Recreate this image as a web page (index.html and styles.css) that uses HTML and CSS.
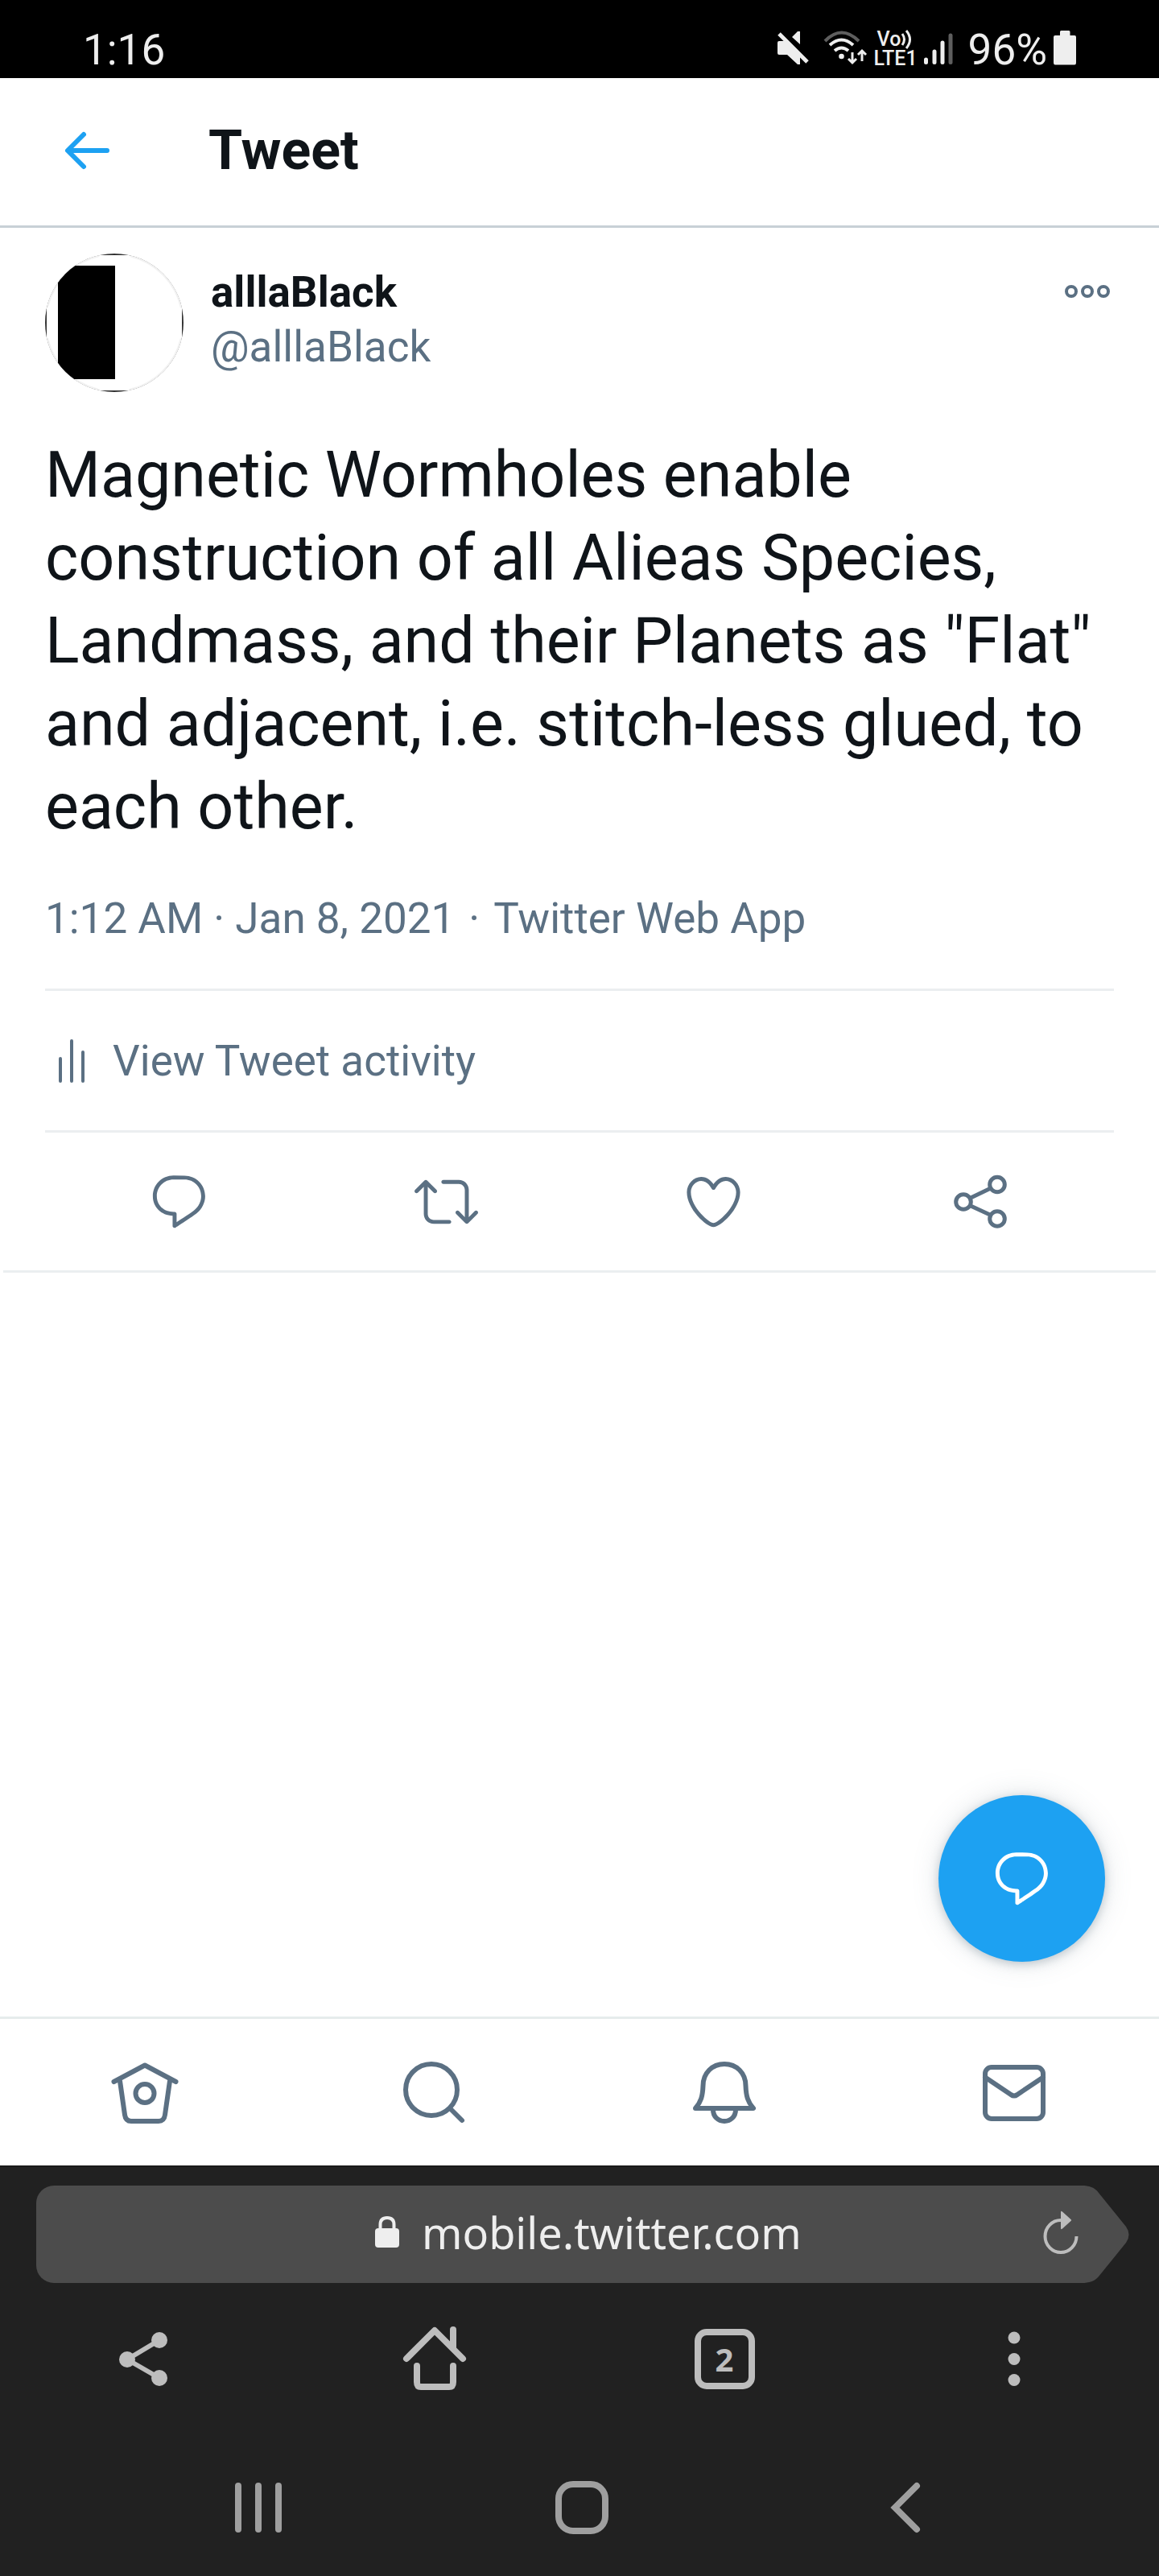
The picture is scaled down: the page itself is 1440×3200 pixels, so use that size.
FILE: index.html
```html
<!DOCTYPE html>
<html lang="en">
<head>
<meta charset="utf-8">
<meta name="viewport" content="width=device-width, initial-scale=1">
<title>Tweet</title>
<link rel="stylesheet" href="styles.css">
</head>
<body>
<div class="status-bar">
  <time class="clock">1:16</time>
  <div class="status-icons">
    <svg class="icon-mute" viewBox="0 0 48 44" width="48" height="44" aria-label="Muted">
      <path d="M2 13H9L28 31V42H25L12 30H2Q0 30 0 28V15Q0 13 2 13ZM18 8L25 1H28V17Z" fill="#eee"/>
      <path d="M4 1L40 36" stroke="#000" stroke-width="5"/>
      <path d="M2 4L37 39" stroke="#eee" stroke-width="5"/>
    </svg>
    <svg viewBox="0 0 56 44" width="56" height="44" fill="none" stroke="#eee" stroke-width="4" aria-label="Wi-Fi">
      <path d="M3 13Q23.500-8 45 13" stroke="#5e5e5e"/>
      <path d="M9 18Q23.500 5 38 18M15 25Q23.500 18 32 25"/>
      <circle cx="23.500" cy="32" r="3.300" fill="#eee" stroke="none"/>
      <path d="M37 27V39M32 35L37 40L42 35M49 38V26M44 30L49 25L54 30" stroke-width="3"/>
    </svg>
    <div class="volte">
      <span class="volte-top">Vo<svg viewBox="0 0 16 24" width="16" height="24" fill="none" stroke="#eee" stroke-width="3"><path d="M2 5Q7 12 2 19M7 1Q16 12 7 23"/></svg></span>
      <span>LTE1</span>
    </div>
    <svg viewBox="0 0 36 44" width="36" height="44" stroke="#eee" stroke-width="5" stroke-linecap="round" aria-label="Signal">
      <path d="M2.500 36V39.500M13 26V39.500M23 15V39.500"/><path d="M33 6V39.500" stroke="#5e5e5e"/>
    </svg>
    <span class="battery-level">96%</span>
    <svg viewBox="0 0 28 44" width="28" height="44" fill="#eee" aria-label="Battery"><path d="M8 1.500Q8 0 9.500 0H19Q20.500 0 20.500 1.500V6H26Q28 6 28 8V40Q28 42.500 26 42.500H2Q0 42.500 0 40V8Q0 6 2 6H8Z"/></svg>
  </div>
</div>

<header class="page-header">
  <button class="icon-button" type="button" aria-label="Back">
    <svg viewBox="0 0 58 50" width="58" height="50" fill="none" stroke="#1da1f2" stroke-width="6" stroke-linecap="round" stroke-linejoin="round"><path d="M54 25H6M25 5L5 25L25 45"/></svg>
  </button>
  <h1>Tweet</h1>
</header>

<main>
  <article class="tweet">
    <div class="author">
      <svg class="avatar" viewBox="0 0 172 172" width="172" height="172" aria-label="alllaBlack">
        <defs><clipPath id="disc"><circle cx="86" cy="86" r="86"/></clipPath></defs>
        <g clip-path="url(#disc)">
          <rect width="172" height="172" fill="#333"/>
          <rect x="2" y="2" width="168" height="168" fill="#fff"/>
          <circle cx="86" cy="86" r="85" fill="none" stroke="#f2f2f2" stroke-width="2" stroke-dasharray="94 39.500" stroke-dashoffset="-20"/>
          <rect x="16" y="15" width="71" height="141" fill="#000"/>
        </g>
      </svg>
      <div class="names">
        <a class="name" href="#profile">alllaBlack</a>
        <a class="handle" href="#profile">@alllaBlack</a>
      </div>
      <button class="icon-button more" type="button" aria-label="More">
        <svg viewBox="0 0 60 20" width="60" height="20" fill="none" stroke="#5b7083" stroke-width="4"><circle cx="10" cy="10" r="6"/><circle cx="30" cy="10" r="6"/><circle cx="50" cy="10" r="6"/></svg>
      </button>
    </div>
    <p class="tweet-text">Magnetic Wormholes enable construction of all Alieas Species, Landmass, and their Planets as "Flat" and adjacent, i.e. stitch-less glued, to each other.</p>
    <div class="meta"><a href="#status">1:12 AM · Jan 8, 2021</a><span class="dot">·</span><a href="#source">Twitter Web App</a></div>
    <a class="activity" href="#activity">
      <svg viewBox="0 0 36 56" width="36" height="56" stroke="#5b7083" stroke-width="4" stroke-linecap="round"><path d="M3 25V53M17 3V53M31 17V53"/></svg>
      <span>View Tweet activity</span>
    </a>
    <div class="actions">
      <button class="icon-button" type="button" aria-label="Reply"><svg viewBox="0 0 24 24" width="79" height="79" fill="#5b7083"><path d="M14.046 2.242l-4.148-.01h-.002c-4.374 0-7.8 3.427-7.8 7.802 0 4.098 3.186 7.206 7.465 7.37v3.828c0 .108.044.286.12.403.142.225.384.347.632.347.138 0 .277-.038.402-.118.264-.168 6.473-4.14 8.088-5.506 1.902-1.61 3.04-3.97 3.043-6.312v-.017c-.006-4.367-3.43-7.787-7.8-7.788zm3.787 12.972c-1.134.96-4.862 3.405-6.772 4.643V16.67c0-.414-.335-.75-.75-.75h-.396c-3.66 0-6.318-2.476-6.318-5.886 0-3.534 2.768-6.302 6.3-6.302l4.147.01h.002c3.532 0 6.3 2.766 6.302 6.296-.003 1.91-.942 3.844-2.514 5.176z"/></svg></button>
      <button class="icon-button" type="button" aria-label="Retweet"><svg viewBox="0 0 24 24" width="79" height="79" fill="#5b7083"><path d="M23.77 15.67c-.292-.293-.767-.293-1.06 0l-2.22 2.22V7.65c0-2.068-1.683-3.75-3.75-3.75h-5.85c-.414 0-.75.336-.75.75s.336.75.75.75h5.85c1.24 0 2.25 1.01 2.25 2.25v10.24l-2.22-2.22c-.293-.293-.768-.293-1.06 0s-.294.768 0 1.06l3.5 3.5c.145.147.337.22.53.22s.383-.072.53-.22l3.5-3.5c.294-.292.294-.767 0-1.06zm-10.66 3.28H7.26c-1.24 0-2.25-1.01-2.25-2.25V6.46l2.22 2.22c.148.147.34.22.532.22s.384-.073.53-.22c.293-.293.293-.768 0-1.06l-3.5-3.5c-.293-.294-.768-.294-1.06 0l-3.5 3.5c-.294.292-.294.767 0 1.06s.767.293 1.06 0l2.22-2.22V16.7c0 2.068 1.683 3.75 3.75 3.75h5.85c.414 0 .75-.336.75-.75s-.337-.75-.75-.75z"/></svg></button>
      <button class="icon-button" type="button" aria-label="Like"><svg viewBox="0 0 24 24" width="79" height="79" fill="#5b7083"><path d="M12 21.638h-.014C9.403 21.59 1.95 14.856 1.95 8.478c0-3.064 2.525-5.754 5.403-5.754 2.29 0 3.83 1.58 4.646 2.73.814-1.148 2.354-2.73 4.645-2.73 2.88 0 5.404 2.69 5.404 5.755 0 6.376-7.454 13.11-10.037 13.157H12zM7.354 4.225c-2.08 0-3.903 1.988-3.903 4.255 0 5.74 7.034 11.596 8.55 11.658 1.518-.062 8.55-5.917 8.55-11.658 0-2.267-1.823-4.255-3.903-4.255-2.528 0-3.94 2.936-3.952 2.965-.23.562-1.156.562-1.387 0-.014-.03-1.425-2.965-3.954-2.965z"/></svg></button>
      <button class="icon-button" type="button" aria-label="Share"><svg viewBox="0 0 79 79" width="79" height="79" fill="none" stroke="#5b7083" stroke-width="5"><circle cx="18" cy="40" r="9.300"/><circle cx="60" cy="18.500" r="9.300"/><circle cx="60" cy="61" r="9.300"/><path d="M26 35.500L52 23M26 44.500L52 56.500"/></svg></button>
    </div>
  </article>
  <button class="reply-fab" type="button" aria-label="Reply to Tweet"><svg viewBox="0 0 24 24" width="79" height="79" fill="#fff"><path d="M14.046 2.242l-4.148-.01h-.002c-4.374 0-7.8 3.427-7.8 7.802 0 4.098 3.186 7.206 7.465 7.37v3.828c0 .108.044.286.12.403.142.225.384.347.632.347.138 0 .277-.038.402-.118.264-.168 6.473-4.14 8.088-5.506 1.902-1.61 3.04-3.97 3.043-6.312v-.017c-.006-4.367-3.43-7.787-7.8-7.788zm3.787 12.972c-1.134.96-4.862 3.405-6.772 4.643V16.67c0-.414-.335-.75-.75-.75h-.396c-3.66 0-6.318-2.476-6.318-5.886 0-3.534 2.768-6.302 6.3-6.302l4.147.01h.002c3.532 0 6.3 2.766 6.302 6.296-.003 1.91-.942 3.844-2.514 5.176z"/></svg></button>
</main>

<nav class="tabs" aria-label="Primary">
  <a href="#home" aria-label="Home"><svg viewBox="0 0 84 84" width="84" height="84"><path d="M3.500 29L42 8.500L80.500 29M11 28L17 70Q18 78 25 78H59Q66 78 67 70L73 28"/><circle cx="42" cy="43.500" r="11.500"/></svg></a>
  <a href="#explore" aria-label="Explore"><svg viewBox="0 0 84 84" width="84" height="84"><circle cx="38" cy="39" r="32"/><path d="M61 62L76 77"/></svg></a>
  <a href="#notifications" aria-label="Notifications"><svg viewBox="0 0 84 84" width="84" height="84"><path d="M6 62C13 54 15 47 15.500 34C15.500 18 27 7 42 7C57 7 68.500 18 68.500 34C69 47 71 54 78 62ZM28 62V64C28 72 34 78 42 78C50 78 56 72 56 64V62"/></svg></a>
  <a href="#messages" aria-label="Messages"><svg viewBox="0 0 84 84" width="84" height="84"><rect x="6" y="11" width="72" height="64" rx="8"/><path d="M6 23.500L38 45Q42 48 46 45L78 23.500"/></svg></a>
</nav>

<footer class="browser">
  <div class="address-bar">
    <div class="address-field">
      <label class="address">
        <svg viewBox="0 0 30 40" width="30" height="40" aria-label="Secure"><rect y="15" width="30" height="24" rx="4" fill="#eee"/><path d="M6.500 17V10.500Q6.500 2 15 2T23.500 10.500V17" fill="none" stroke="#eee" stroke-width="4"/></svg>
        <input type="text" value="mobile.twitter.com" aria-label="Address">
      </label>
      <button class="icon-button reload" type="button" aria-label="Reload"><svg viewBox="0 0 44 54" width="44" height="54"><path d="M22 12A19.500 20 0 1 0 41.500 32" fill="none" stroke="#bdbdbd" stroke-width="4"/><path d="M22 2Q22 0 24 1.500L34.500 11Q36 12 34.500 13L24 22.500Q22 24 22 22Z" fill="#bdbdbd"/></svg></button>
    </div>
    <svg class="address-point" viewBox="0 0 64 121" width="64" height="121"><path d="M0 0H4C13 0 20 2 25 9L59 51Q66 61 59 71L25 113C20 119 13 121 4 121H0Z" fill="#4c4c4c"/></svg>
  </div>
  <div class="toolbar">
    <button class="icon-button" type="button" aria-label="Share page"><svg viewBox="2 0 64 80" width="64" height="80" fill="#bdbdbd" stroke="#bdbdbd"><path d="M12 41L52 17M12 41L52 64" stroke-width="6"/><circle cx="12" cy="41" r="10" stroke="none"/><circle cx="52" cy="17" r="10" stroke="none"/><circle cx="52" cy="64" r="10" stroke="none"/></svg></button>
    <button class="icon-button" type="button" aria-label="Browser home"><svg viewBox="0 0 80 80" width="80" height="80" fill="none" stroke="#bdbdbd" stroke-width="8" stroke-linecap="round" stroke-linejoin="round"><path d="M5 40L40 5L75 40M63 4V27M18 49V69Q18 75 23 75H58Q63 75 63 69V49"/></svg></button>
    <button class="icon-button" type="button" aria-label="Open tabs"><span class="tab-count">2</span></button>
    <button class="icon-button" type="button" aria-label="Menu"><svg viewBox="0 0 20 80" width="20" height="80" fill="#bdbdbd"><circle cx="10" cy="14" r="7.500"/><circle cx="10" cy="40.500" r="7.500"/><circle cx="10" cy="66.500" r="7.500"/></svg></button>
  </div>
  <div class="system-nav">
    <button class="icon-button" type="button" aria-label="Recents"><svg viewBox="0 0 66 66" width="66" height="66" stroke="#9f9f9f" stroke-width="8" stroke-linecap="round"><path d="M8 6V60M33 6V60M58 6V60"/></svg></button>
    <button class="icon-button" type="button" aria-label="Device home"><svg viewBox="0 0 66 66" width="66" height="66" fill="none" stroke="#9f9f9f" stroke-width="8"><rect x="4" y="4" width="58" height="58" rx="18"/></svg></button>
    <button class="icon-button" type="button" aria-label="Device back"><svg viewBox="0 0 66 66" width="66" height="66" fill="none" stroke="#9f9f9f" stroke-width="8" stroke-linecap="round"><path d="M47 6L20 33L47 60"/></svg></button>
  </div>
</footer>
</body>
</html>
```

FILE: styles.css
```css
* {
  box-sizing: border-box;
}

body {
  margin: 0;
  min-height: 100vh;
  display: flex;
  flex-direction: column;
  background: #fff;
  color: #0f1419;
  font-family: Roboto, "Liberation Sans", sans-serif;
  font-size: 53px;
  line-height: 68px;
}

a {
  color: inherit;
  text-decoration: none;
}

svg {
  display: block;
  flex: none;
}

.icon-button {
  display: flex;
  align-items: center;
  justify-content: center;
  padding: 0;
  border: 0;
  background: none;
}

/* Phone status bar */
.status-bar {
  display: flex;
  align-items: flex-start;
  justify-content: space-between;
  height: 97px;
  padding: 28px 103px 0 103px;
  background: #000;
  color: #eee;
}

.status-icons {
  display: flex;
  gap: 8px;
}

.status-icons > svg {
  margin-top: 10px;
}

.volte {
  display: flex;
  flex-direction: column;
  width: 54px;
  padding-top: 9px;
  font-size: 25px;
  line-height: 23px;
  font-weight: 500;
}

.volte-top {
  display: flex;
  padding-left: 4px;
}

.battery-level {
  margin-left: 11px;
}

/* Tweet page header */
.page-header {
  display: flex;
  align-items: center;
  gap: 122px;
  height: 186px;
  padding: 0 79px 4px;
  border-bottom: 3px solid #c8d0d6;
}

.page-header h1 {
  margin: 0;
  font-size: 68px;
  font-weight: 700;
}

main {
  flex: 1;
  position: relative;
}

.tweet {
  margin: 0 4px;
  padding: 32px 52px 0;
  border-bottom: 3px solid #ebeef0;
}

.author {
  display: flex;
  align-items: flex-start;
  gap: 34px;
}

.names {
  display: flex;
  flex: 1;
  flex-direction: column;
  padding-top: 14px;
}

.name {
  font-weight: 700;
}

.handle,
.meta,
.activity {
  color: #5b7083;
}

.more {
  margin: 37px 3px 0 0;
}

.tweet-text {
  margin: 52px 0 53px;
  font-size: 79px;
  line-height: 103px;
}

.meta {
  display: flex;
  gap: 17px;
  padding-bottom: 53px;
  border-bottom: 3px solid #ebeef0;
}

.activity {
  display: flex;
  align-items: center;
  gap: 32px;
  height: 176px;
  padding-left: 16px;
  border-bottom: 3px solid #ebeef0;
}

.actions {
  display: grid;
  grid-template-columns: repeat(4, 1fr);
  height: 171px;
}

.reply-fab {
  position: absolute;
  right: 67px;
  bottom: 68px;
  display: flex;
  align-items: center;
  justify-content: center;
  width: 207px;
  height: 207px;
  padding: 0;
  border: 0;
  border-radius: 50%;
  background: #1da1f2;
  box-shadow: 0 0 34px rgba(101, 119, 134, 0.2), 0 3px 12px rgba(101, 119, 134, 0.35);
}

.tabs {
  display: grid;
  grid-template-columns: repeat(4, 1fr);
  height: 185px;
  border-top: 3px solid #e6ecec;
}

.tabs a {
  display: flex;
  align-items: center;
  justify-content: center;
}

.tabs svg {
  fill: none;
  stroke: #5b7083;
  stroke-width: 6px;
  stroke-linecap: round;
  stroke-linejoin: round;
}

/* Browser controls and system navigation */
.browser {
  border-top: 2px solid #1a1a1a;
  background: #212121;
}

.address-bar {
  display: flex;
  padding: 23px 36px 0 45px;
}

.address-field {
  display: flex;
  flex: 1;
  align-items: center;
  justify-content: space-between;
  height: 121px;
  padding: 0 0 6px 421px;
  border-radius: 22px 0 0 22px;
  background: #4c4c4c;
}

.address {
  display: flex;
  align-items: center;
  gap: 28px;
}

.address input {
  width: 500px;
  padding: 0;
  border: 0;
  background: none;
  color: #eee;
  font: 54px/72px "Noto Sans", sans-serif;
}

.toolbar {
  display: grid;
  grid-template-columns: repeat(4, 1fr);
  height: 188px;
}

.tab-count {
  width: 75px;
  height: 75px;
  border: 8px solid #bdbdbd;
  border-radius: 15px;
  color: #bdbdbd;
  font: 700 40px/59px "Noto Sans", sans-serif;
}

.system-nav {
  display: grid;
  grid-template-columns: repeat(3, 1fr);
  padding: 58px 114px 52px 120px;
}
```
